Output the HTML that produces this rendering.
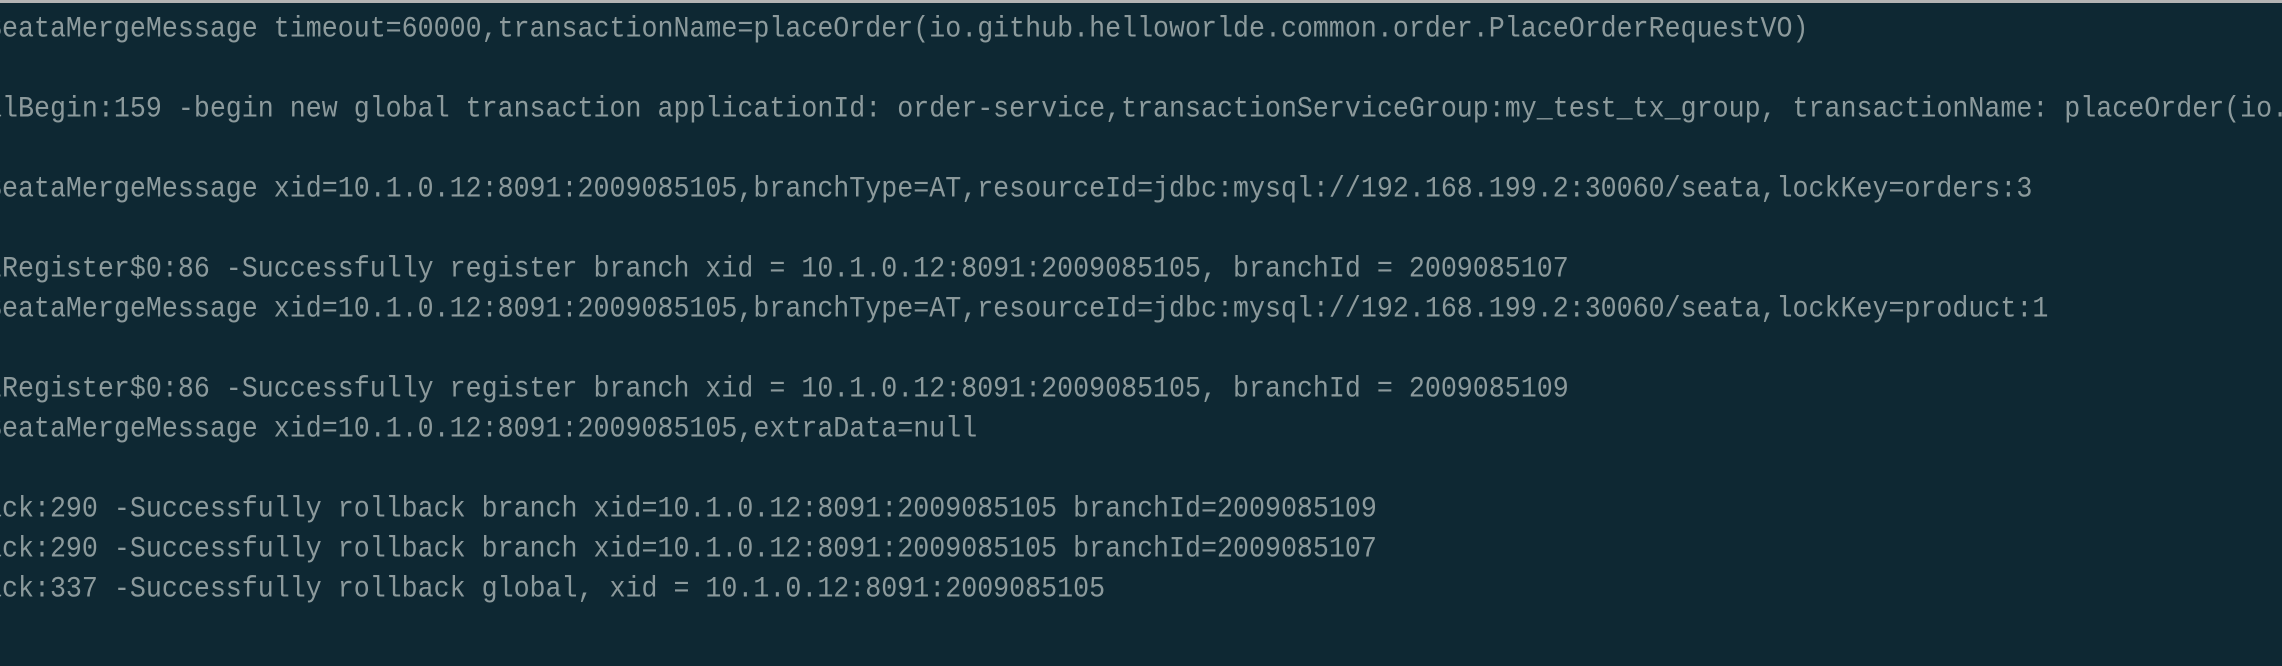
<!DOCTYPE html>
<html><head><meta charset="utf-8"><style>
html,body{margin:0;padding:0;}
body{width:2282px;height:666px;background:#0e2833;overflow:hidden;position:relative;}
.bar{position:absolute;left:0;top:0;width:2282px;height:3px;background:#b4b4b4;}
.l{position:absolute;left:-14px;font-family:"Liberation Mono",monospace;font-size:26.65px;line-height:40px;height:40px;color:#8c9a9c;white-space:pre;transform:scaleY(1.12);transform-origin:0 50%;}
</style></head><body>
<div class="bar"></div>
<div class="l" style="top:10px">SeataMergeMessage timeout=60000,transactionName=placeOrder(io.github.helloworlde.common.order.PlaceOrderRequestVO)</div>
<div class="l" style="top:90px">alBegin:159 -begin new global transaction applicationId: order-service,transactionServiceGroup:my_test_tx_group, transactionName: placeOrder(io.github</div>
<div class="l" style="top:170px">SeataMergeMessage xid=10.1.0.12:8091:2009085105,branchType=AT,resourceId=jdbc:mysql://192.168.199.2:30060/seata,lockKey=orders:3</div>
<div class="l" style="top:250px">lRegister$0:86 -Successfully register branch xid = 10.1.0.12:8091:2009085105, branchId = 2009085107</div>
<div class="l" style="top:290px">SeataMergeMessage xid=10.1.0.12:8091:2009085105,branchType=AT,resourceId=jdbc:mysql://192.168.199.2:30060/seata,lockKey=product:1</div>
<div class="l" style="top:370px">lRegister$0:86 -Successfully register branch xid = 10.1.0.12:8091:2009085105, branchId = 2009085109</div>
<div class="l" style="top:410px">SeataMergeMessage xid=10.1.0.12:8091:2009085105,extraData=null</div>
<div class="l" style="top:490px">ack:290 -Successfully rollback branch xid=10.1.0.12:8091:2009085105 branchId=2009085109</div>
<div class="l" style="top:530px">ack:290 -Successfully rollback branch xid=10.1.0.12:8091:2009085105 branchId=2009085107</div>
<div class="l" style="top:570px">ack:337 -Successfully rollback global, xid = 10.1.0.12:8091:2009085105</div>
</body></html>
